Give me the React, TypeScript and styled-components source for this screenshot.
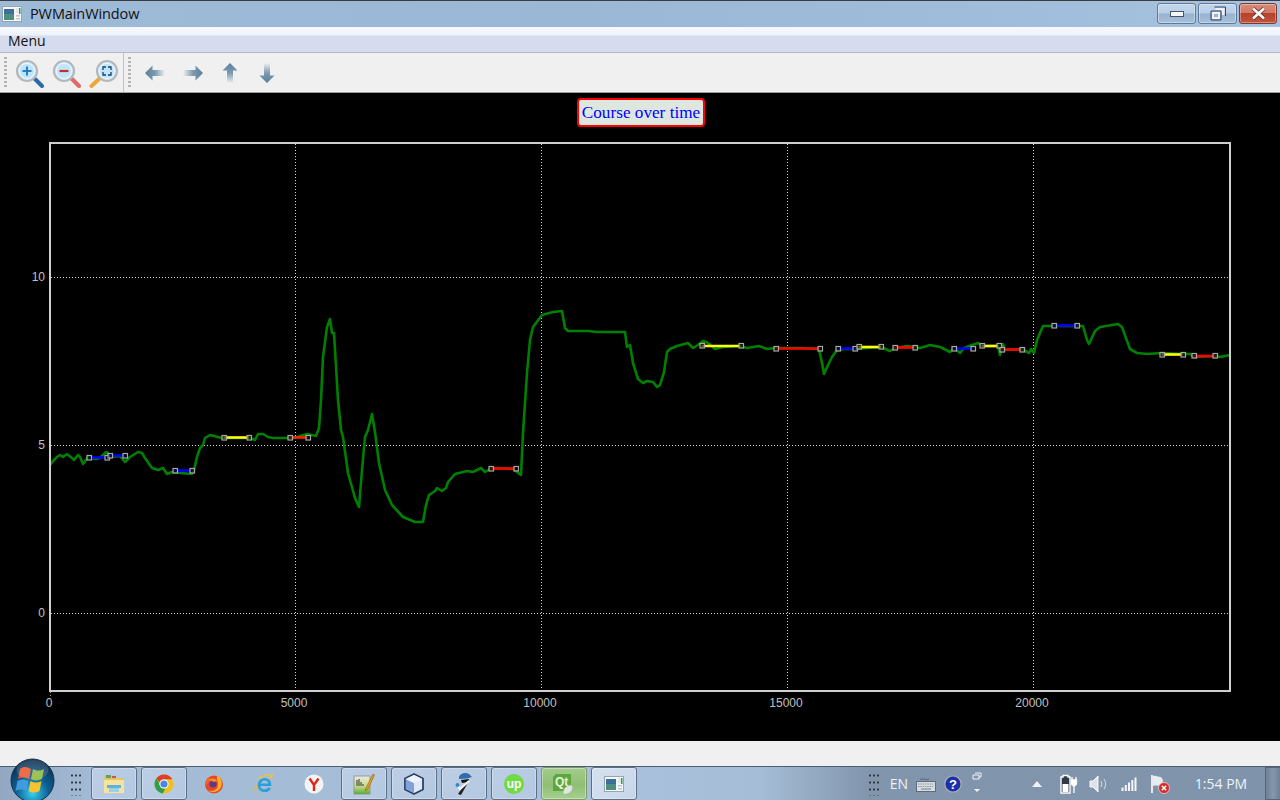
import React from "react";
import styled, { createGlobalStyle } from "styled-components";

const Global = createGlobalStyle`
  html, body { margin: 0; padding: 0; background: #000; }
  * { box-sizing: border-box; }
`;

const Page = styled.div`
  width: 1280px; height: 800px; display: flex; flex-direction: column; overflow: hidden;
  font-family: "Open Sans", "Noto Sans", sans-serif;
`;
const TitleBar = styled.div`
  height: 27px; display: flex; align-items: center; padding: 0 3px 0 2px;
  border-top: 1px solid #3c3c3c;
  background: linear-gradient(90deg, #9dbad7 0%, #9ab7d5 45%, #a0bddb 80%, #a6c2de 100%);
`;
const AppIconSlot = styled.div`width: 20px; height: 20px; display: flex; margin-right: 8px;`;
const WindowTitle = styled.div`flex: 1; font-size: 14.5px; color: #111; letter-spacing: -.1px; line-height: 26px;`;
const WinButtons = styled.div`display: flex; gap: 2px; align-self: flex-start; margin-top: 2px;`;
const WinButton = styled.div<{ $close?: boolean; $w: number }>`
  width: ${p => p.$w}px; height: 21px; border-radius: 3px; display: flex; align-items: center; justify-content: center;
  border: 1px solid ${p => (p.$close ? "#7a3a34" : "#5f7a98")};
  box-shadow: inset 0 0 0 1px rgba(255,255,255,.35);
  background: ${p => p.$close
    ? "linear-gradient(#d98a78 0%, #d27a66 45%, #b8412a 50%, #c2553f 100%)"
    : "linear-gradient(#c3d6ea 0%, #b9cfe6 48%, #97b3d0 52%, #a7c0da 100%)"};
`;
const MenuBar = styled.div`
  height: 26px; display: flex; align-items: flex-end; padding: 0 0 3px 8px;
  border-bottom: 1px solid #b4b9c8;
  background: linear-gradient(#f7f9fe 0, #eef2fb 8px, #d6dcee 9px, #d6dcee 100%);
`;
const MenuItem = styled.span`font-size: 14px; color: #111; line-height: 16px;`;
const Toolbar = styled.div`
  height: 40px; display: flex; align-items: center; background: #f0f0f0;
  border-bottom: 1px solid #9e9e9e; padding-left: 4px;
`;
const Grip = styled.div`
  width: 3px; height: 32px;
  background: repeating-linear-gradient(#b4b4b4 0 2px, transparent 2px 4px);
`;
const ToolSep = styled.div`width: 1px; height: 39px; background: #c4c4c4; margin: 0 4px 0 0; align-self: flex-start;`;
const ToolGroup = styled.div<{ $w: number; $pad: number }>`
  width: ${p => p.$w}px; padding-left: ${p => p.$pad}px; display: flex; align-items: center;
`;
const ToolIcon = styled.div<{ $w: number }>`width: ${p => p.$w}px; height: 32px; display: flex; align-items: center; justify-content: center;`;

const ChartPanel = styled.div`
  height: 648px; background: #000; display: flex; flex-direction: column; align-items: center; padding-top: 5px;
`;
const PlotTitle = styled.div`
  width: 128px; height: 29px; border: 2px solid #f00; border-radius: 4px; background: #dde6df; margin-left: 2px;
  color: #0000ff; font-family: "Liberation Serif", serif; font-size: 17.2px; line-height: 25px; text-align: center; white-space: nowrap;
`;
const Plot = styled.svg`display: block; width: 1280px; height: 614px; flex: none;`;
const AxisLabel = styled.text`
  font-family: "Liberation Sans", sans-serif; font-size: 12px; fill: #c0c0c0;
`;
const StatusBar = styled.div`height: 25px; background: #f0f0f0;`;
const Taskbar = styled.div`
  height: 34px; display: flex; align-items: stretch; border-top: 1px solid #4d5c6e;
  background: linear-gradient(90deg, #92a8c2 0, #a3bad4 90px, #a8c0dc 620px, #a6bdd7 760px, #8195ad 870px, #7f93ab 100%);
`;
const OrbSlot = styled.div`width: 64px; position: relative;`;
const Orb = styled.div`position: absolute; left: 10px; top: -9px; width: 45px; height: 45px;`;
const GripSlot = styled.div`width: 27px; display: flex; align-items: center; padding-left: 6px;`;
const TaskList = styled.div`display: flex; gap: 4px;`;
const TaskButton = styled.div<{ $variant?: "open" | "active" | "none" }>`
  width: 46px; height: 33px; display: flex; align-items: center; justify-content: center;
  border-radius: 3px;
  ${p => p.$variant === "open" && `
    border: 1px solid #5d6f85; box-shadow: inset 0 0 0 1px rgba(255,255,255,.3);
    background: linear-gradient(135deg, #bccee5 0%, #b3c8e1 100%);
  `}
  ${p => p.$variant === "active" && `
    border: 1px solid #7d9a6c; box-shadow: inset 0 0 0 1px rgba(255,255,255,.35);
    background: linear-gradient(#a4cb8c 0%, #8fbf74 55%, #a6cf90 100%);
  `}
`;
const TaskButtonLight = styled(TaskButton)`
  background: linear-gradient(135deg, #d4e1f0 0%, #c6d6ea 100%) !important;
`;
const Spacer = styled.div`flex: 1;`;
const Tray = styled.div`display: flex; align-items: center; height: 33px;`;
const TrayItem = styled.div<{ $w: number; $ml?: number }>`
  width: ${p => p.$w}px; margin-left: ${p => p.$ml || 0}px; height: 100%;
  display: flex; align-items: center; justify-content: center; position: relative;
`;
const TrayText = styled.span<{ $size: number }>`
  font-family: "Open Sans", "Noto Sans", sans-serif; font-size: ${p => p.$size}px; color: #eef3f8; white-space: nowrap;
`;
const ShowDesktop = styled.div`
  width: 15px; height: 33px; margin-left: 18px; border: 1px solid #56677a; border-right: 0;
  background: linear-gradient(90deg, #6f8096, #8497ad 50%, #6f8096);
`;
const DotsGrid = styled.div`
  width: 12px; height: 24px; 
  background-image: radial-gradient(circle, #2c3540 1px, transparent 1.2px);
  background-size: 4px 7px;
`;

const GREEN = [[50,465],[53,461],[57,457],[60,455],[63,457],[67,454],[72,458],[74,460],[78,455],[80,457],[83,464],[88,457],[95,459],[100,458],[105,453],[107,452],[110,457],[120,456],[125,462],[130,457],[138,452],[142,453],[145,458],[152,468],[158,470],[163,468],[167,474],[172,472],[180,473],[192,474],[194,470],[197,457],[200,448],[203,445],[205,438],[210,435],[222,438],[237,438],[250,438],[255,440],[258,434],[263,434],[268,437],[273,438],[288,438],[297,437],[307,434],[316,436],[319,428],[321,400],[323,357],[327,327],[330,319],[332,333],[334,333],[338,400],[341,430],[343,437],[348,473],[355,498],[359,507],[362,470],[365,437],[368,430],[372,414],[375,432],[379,463],[385,490],[392,505],[403,517],[415,522],[423,522],[426,505],[429,495],[435,491],[437,488],[442,491],[446,488],[448,482],[455,474],[467,471],[473,472],[481,468],[485,472],[490,469],[497,468],[513,469],[521,475],[523,433],[527,373],[530,340],[533,327],[542,315],[553,312],[562,311],[565,328],[568,331],[588,331],[597,332],[625,332],[627,347],[630,345],[633,363],[638,379],[643,383],[647,381],[653,382],[657,387],[660,385],[664,372],[667,352],[670,349],[677,346],[688,343],[693,348],[698,345],[703,341],[708,343],[715,349],[723,347],[740,346],[747,348],[759,346],[767,349],[775,348],[800,348],[819,349],[822,363],[824,374],[828,365],[832,357],[837,350],[845,349],[855,349],[867,348],[881,347],[890,351],[895,348],[907,346],[920,348],[930,345],[940,347],[950,352],[954,348],[960,353],[964,348],[972,345],[978,343],[983,346],[998,346],[1000,355],[1003,344],[1005,350],[1022,349],[1029,353],[1031,349],[1034,353],[1037,340],[1043,326],[1053,326],[1077,326],[1083,326],[1087,340],[1089,344],[1095,331],[1100,327],[1118,324],[1122,327],[1130,349],[1137,353],[1147,354],[1162,353],[1182,354],[1190,354],[1194,357],[1215,356],[1220,357],[1230,355]];

const SEGMENTS: [number, number, number, string][] = [
  [89,106.5,457.5,"#0000ff"],[110,124.5,455.5,"#0000ff"],[174.5,191.5,470.5,"#0000ff"],[223.5,249,437.5,"#ffff00"],[289.5,307.5,437.5,"#ff2000"],
  [490.5,515.5,468.5,"#ff0000"],[701.5,740.5,346,"#ffff00"],[775.5,819.5,348.5,"#ff0000"],[838,855,348.5,"#0000ff"],[858.5,881,347,"#ffff00"],[894.5,914.5,347.5,"#ff0000"],
  [953.5,972.5,348.5,"#0000ff"],[981.5,998.5,346,"#ffff00"],[1001.5,1021.5,349.5,"#ff0000"],[1053.5,1077,325.5,"#0000ff"],[1161.5,1182.5,354.5,"#ffff00"],[1193.5,1215,356,"#ff0000"],
];

const XT = [[50,"0"],[295,"5000"],[541,"10000"],[787,"15000"],[1033,"20000"]] as [number,string][];
const YT = [[277,"10"],[445,"5"],[613,"0"]] as [number,string][];

function Chart() {
  return (
    <Plot viewBox="0 127 1280 614">
      {XT.slice(1).map(([x]) => <line key={x} x1={x+.5} x2={x+.5} y1={144} y2={690} stroke="#d8d8d8" strokeDasharray="1 2" />)}
      {YT.map(([y]) => <line key={y} x1={51} x2={1230} y1={y+.5} y2={y+.5} stroke="#d8d8d8" strokeDasharray="1 2" />)}
      <polyline fill="none" stroke="#008000" strokeWidth={2.6} strokeLinejoin="round" points={GREEN.map(p => p.join(",")).join(" ")} />
      {SEGMENTS.map(([a,b,y,c],i) => (
        <g key={i}>
          <line x1={a} x2={b} y1={y} y2={y} stroke={c} strokeWidth={2.6} />
          <rect x={Math.round(a)-2} y={Math.round(y)-2.5} width={4.5} height={4.5} fill="#000" fillOpacity={.6} stroke="#a8a8a8" strokeWidth={1.2} />
          <rect x={Math.round(b)-2} y={Math.round(y)-2.5} width={4.5} height={4.5} fill="#000" fillOpacity={.6} stroke="#a8a8a8" strokeWidth={1.2} />
        </g>
      ))}
      <rect x={50} y={143} width={1180} height={548} fill="none" stroke="#cfcfcf" strokeWidth={2} />
      <line x1={50.5} x2={50.5} y1={692} y2={697} stroke="#aaa" strokeDasharray="1 2" />
      {XT.map(([x,t]) => <AxisLabel key={t} x={x-1} y={707} textAnchor="middle">{t}</AxisLabel>)}
      {YT.map(([y,t]) => <AxisLabel key={t} x={45} y={y+4} textAnchor="end">{t}</AxisLabel>)}
    </Plot>
  );
}

const AppIcon = ({ s = 20 }: { s?: number }) => (
  <svg width={s} height={s} viewBox="0 0 20 20">
    <rect x=".5" y="2.5" width="19" height="15" fill="#f4f6f8" stroke="#9aa4ad" />
    <rect x="2" y="5" width="10" height="11" fill="#4d8f7f" />
    <rect x="2" y="5" width="10" height="5" fill="#3c6f9a" />
    <rect x="14" y="4" width="4" height="5" fill="#e4e8ec" />
    <rect x="17" y="4" width="1.5" height="6" fill="#2f9a55" />
    <rect x="14" y="11" width="4" height="1.5" fill="#c0c6cc" />
    <rect x="14" y="14" width="4" height="1.5" fill="#c0c6cc" />
  </svg>
);

const Magnifier = ({ kind }: { kind: "plus" | "minus" | "fit" }) => {
  const fit = kind === "fit";
  const cx = fit ? 19 : 13, cy = 13;
  const hc = kind === "plus" ? "#2a6aa8" : kind === "minus" ? "#e06a6a" : "#eea838";
  return (
    <svg width={30} height={30} viewBox="0 0 30 30">
      {fit
        ? <line x1="11" y1="21" x2="3.5" y2="28" stroke={hc} strokeWidth="4" strokeLinecap="round" />
        : <line x1="21" y1="21" x2="28" y2="28" stroke={hc} strokeWidth="4" strokeLinecap="round" />}
      <circle cx={cx} cy={cy} r="10" fill="#d6eefb" stroke="#b4b8bc" strokeWidth="2.2" />
      <circle cx={cx} cy={cy} r="7.6" fill="#bfe5fb" stroke="#eef6fb" strokeWidth="1" />
      {kind === "plus" && <path d="M8.500 13h9M13 8.500v9" stroke="#2a7cc4" strokeWidth="2" />}
      {kind === "minus" && <path d="M8.500 13h9" stroke="#cc2a2a" strokeWidth="2.200" />}
      {fit && <path d="M15 12v-3h3M20 9h3v3M23 14v3h-3M18 17h-3v-3" fill="none" stroke="#1c3f66" strokeWidth="1.300" />}
    </svg>
  );
};

const Arrow = ({ dir }: { dir: "left" | "right" | "up" | "down" }) => {
  const rot = { left: 0, right: 180, up: 90, down: 270 }[dir];
  const id = `ar-${dir}`;
  return (
    <svg width={22} height={22} viewBox="0 0 22 22">
      <defs>
        <linearGradient id={id} x1="0" x2="1" y1="0" y2="0">
          <stop offset="0" stopColor="#5b7f99" />
          <stop offset=".5" stopColor="#7b9ab0" />
          <stop offset="1" stopColor="#f0f0f0" />
        </linearGradient>
      </defs>
      <path transform={`rotate(${rot} 11 11)`} d="M1 11 8.500 3.500v4.500h12.500v6H8.500v4.500z" fill={`url(#${id})`} />
    </svg>
  );
};

const Windows = () => (
  <svg width={45} height={45} viewBox="0 0 45 45">
    <defs>
      <radialGradient id="orbg" cx=".5" cy=".8" r=".75">
        <stop offset="0" stopColor="#34d0f0" />
        <stop offset=".5" stopColor="#0f5f93" />
        <stop offset="1" stopColor="#0d2f4d" />
      </radialGradient>
    </defs>
    <circle cx="22.5" cy="22.5" r="21.5" fill="url(#orbg)" stroke="#12334d" />
    <path d="M10 11c4-3 7-2 11 0l-2 10c-4-2-7-2-11 0z" fill="#e8552c" />
    <path d="M23 11c4 2 7 2 11 0l-2 10c-4 2-7 2-11 0z" fill="#8fb83c" />
    <path d="M7.500 23c4-2 7-2 11 0l-2 10c-4-2-7-2-11 0z" fill="#3f9ce0" />
    <path d="M20.500 23c4 2 7 2 11 0l-2 10c-4 2-7 2-11 0z" fill="#f5c330" />
    <ellipse cx="22.500" cy="12" rx="16" ry="10" fill="#fff" opacity=".14" />
  </svg>
);
const Folder = () => (
  <svg width={22} height={22} viewBox="0 0 22 22">
    <path d="M1 3h8l2 2h10v15H1z" fill="#e2c46c" />
    <rect x="3" y="2" width="5" height="3" fill="#5fa05f" /><rect x="9" y="3" width="4" height="2" fill="#d05050" />
    <rect x="1" y="7" width="20" height="13" fill="#f6e39c" />
    <rect x="4" y="12" width="14" height="3" fill="#5fb2dc" /><rect x="6" y="15" width="10" height="4" fill="#9ad0ea" />
  </svg>
);
const Chrome = () => (
  <svg width={20} height={20} viewBox="0 0 20 20">
    <circle cx="10" cy="10" r="9.500" fill="#f0c020" />
    <path d="M10 .5a9.500 9.500 0 0 1 8.300 4.800H10a4.800 4.800 0 0 0-4.400 2.900L2.400 4.300A9.500 9.500 0 0 1 10 .5z" fill="#dc3d30" />
    <path d="M2.400 4.300 6 10.500a4.800 4.800 0 0 0 5.300 4.200L8.700 19.400A9.500 9.500 0 0 1 2.400 4.300z" fill="#2c9f4d" />
    <circle cx="10" cy="10" r="4.600" fill="#fff" /><circle cx="10" cy="10" r="3.600" fill="#4a86e8" />
  </svg>
);
const Firefox = () => (
  <svg width={20} height={20} viewBox="0 0 20 20">
    <circle cx="10" cy="10.500" r="9" fill="#e8462a" />
    <circle cx="9" cy="10" r="3.600" fill="#5a3a8c" />
    <path d="M13 1c5 3 6 9 3.500 13S8 20 4 16c3 2 8 1 9.500-3C15 8 12 5 13 1z" fill="#f9b022" />
    <path d="M4 3c0 3-3 5-2 9 1-3 3-5 6-6z" fill="#f26b24" />
    <path d="M5 6c3-2 6-2 8 1l-3 1z" fill="#f59322" />
  </svg>
);
const IE = () => (
  <svg width={20} height={20} viewBox="0 0 20 20">
    <path d="M4 4.500C9 1 19-1 18.500 1.500 18 4 14 4 13 4" fill="none" stroke="#f0c040" strokeWidth="1.400" />
    <path d="M2 19c-2-2 0-6 2-9" fill="none" stroke="#e8b838" strokeWidth="1.600" />
    <path d="M5.500 10.800h10.500c0-3.500-2.400-5.600-5.200-5.600S5 7.500 5 11s2.400 5.800 5.700 5.800c2.400 0 4-1 5-2.800" fill="none" stroke="#2a9fd8" strokeWidth="2.600" />
  </svg>
);
const Yandex = () => (
  <svg width={20} height={20} viewBox="0 0 20 20">
    <circle cx="10" cy="10" r="9.500" fill="#f4f4f4" />
    <path d="M5.500 4.500 10 11l4.500-6.500M10 11v6" fill="none" stroke="#e1251b" strokeWidth="2.400" />
  </svg>
);
const Notes = () => (
  <svg width={22} height={22} viewBox="0 0 22 22">
    <defs><linearGradient id="ng" x1="0" x2="0" y1="0" y2="1"><stop offset="0" stopColor="#e8e8e0" /><stop offset=".55" stopColor="#c8dc90" /><stop offset="1" stopColor="#58b030" /></linearGradient></defs>
    <rect x="1" y="3" width="16" height="18" fill="url(#ng)" stroke="#8a9080" strokeWidth=".8" />
    <path d="M4 13V7M6 13V6M8 13V9M10 13v-2" stroke="#333" strokeWidth="1" />
    <path d="M20 1 13 15l-1 3 3-2L21.500 2z" fill="#e8a020" stroke="#905a10" strokeWidth=".6" />
  </svg>
);
const Cube = () => (
  <svg width={22} height={22} viewBox="0 0 22 22">
    <path d="M11 1 20 5.500v11L11 21 2 16.500v-11z" fill="#dfe8f4" stroke="#2c3f66" strokeWidth="1.800" strokeLinejoin="round" />
    <path d="M11 10 2.800 6v10L11 20z" fill="#7fa2d8" />
    <path d="M11 10 19.200 6 11 2 2.800 6z" fill="#eef3fa" />
  </svg>
);
const Spy = () => (
  <svg width={18} height={24} viewBox="0 0 18 24">
    <path d="M4 5c1-4 7-5 10-3l3 3-5 1.500-8 .5z" fill="#2f6cab" />
    <path d="M14 7 6 8l1 3 6-1z" fill="#111" />
    <path d="M14 9 6 23l-3-1L11 10z" fill="#222" />
    <path d="M2 12l3 5 9-8" fill="none" stroke="#f4f4f4" strokeWidth="2.200" />
    <circle cx="2.500" cy="13" r="2" fill="#2f8ac8" />
  </svg>
);
const UpText = styled.text`font-family: "Liberation Sans", sans-serif; font-weight: 700; font-size: 12px; fill: #fff;`;
const Upwork = () => (
  <svg width={20} height={20} viewBox="0 0 20 20">
    <circle cx="10" cy="10" r="10" fill="#6fda44" />
    <UpText x="10" y="14" textAnchor="middle">up</UpText>
  </svg>
);
const QtText = styled.text`font-family: "Liberation Sans", sans-serif; font-weight: 700; font-size: 12px; fill: #e8f4dc;`;
const Qt = () => (
  <svg width={22} height={22} viewBox="0 0 22 22">
    <path d="M3 1h15v14l-3 3H0V4z" fill="#5da83c" />
    <QtText x="2" y="13">Qt</QtText>
    <path d="M10 21c0-6 4-9 9-9 2 5-2 10-9 9z" fill="#dfe6dc" stroke="#9ab09a" strokeWidth=".5" />
  </svg>
);

const Keyboard = () => (
  <svg width={20} height={16} viewBox="0 0 20 16">
    <path d="M4 4c2-3 6 1 9-1" fill="none" stroke="#56677a" strokeWidth="1" />
    <rect x=".5" y="5.500" width="19" height="10" fill="#d8dde2" stroke="#5d6c7c" />
    <path d="M2 8h16M2 10.500h16" stroke="#8a97a5" strokeDasharray="1.500 .8" />
    <path d="M5 13h10" stroke="#8a97a5" strokeWidth="1.400" />
  </svg>
);
const HelpTxt = styled.text`font-family: "Liberation Sans", sans-serif; font-weight: 700; font-size: 13px; fill: #fff;`;
const Help = () => (
  <svg width={18} height={18} viewBox="0 0 18 18">
    <circle cx="9" cy="9" r="8.200" fill="#1d2fa8" stroke="#a8afb8" strokeWidth="1.300" />
    <HelpTxt x="9" y="14" textAnchor="middle">?</HelpTxt>
  </svg>
);
const Battery = () => (
  <svg width={18} height={20} viewBox="0 0 18 20">
    <path d="M1 3h2V1.500h5V3h2v16H1z" fill="#2e3a48" stroke="#fff" strokeWidth="1.400" />
    <rect x="2.500" y="10" width="6" height="8" fill="#fff" />
    <path d="M11 6h6M12 3v3M16 3v3M11.500 6v4l2 2h1l2-2V6M14 12v7" fill="#fff" stroke="#fff" strokeWidth="1.300" />
  </svg>
);
const Speaker = () => (
  <svg width={19} height={20} viewBox="0 0 19 20">
    <path d="M1 7h3l5-5v16l-5-5H1z" fill="#dfe3e8" stroke="#f8f8f8" />
    <path d="M12 7c1 2 1 4 0 6M15 5c2 3 2 7 0 10" fill="none" stroke="#c8d0d8" strokeWidth="1.200" />
  </svg>
);
const Signal = () => (
  <svg width={16} height={14} viewBox="0 0 16 14">
    <path d="M.5 10.500h2V14h-2zM3.800 8h2v6h-2zM7 5.500h2V14H7zM10.300 3h2v11h-2zM13.500.5h2V14h-2z" fill="#f4f6f8" />
  </svg>
);
const Flag = () => (
  <svg width={20} height={20} viewBox="0 0 20 20">
    <path d="M2 1v18" stroke="#fff" strokeWidth="1.600" />
    <path d="M3 2c3-1 5 1 8 1l2 3-1 6c-3 0-6-1-9 0z" fill="#e8ecf0" />
    <circle cx="14" cy="14" r="5.500" fill="#d42a2a" stroke="#f0d0d0" strokeWidth=".8" />
    <path d="M11.800 11.800l4.400 4.400M16.200 11.800l-4.400 4.400" stroke="#fff" strokeWidth="1.500" />
  </svg>
);

export default function App() {
  return (
    <Page>
      <Global />
      <TitleBar>
        <AppIconSlot><AppIcon /></AppIconSlot>
        <WindowTitle>PWMainWindow</WindowTitle>
        <WinButtons>
          <WinButton $w={39}>
            <svg width="14" height="6" viewBox="0 0 14 6"><rect x=".5" y=".5" width="13" height="5" fill="#f4f6f8" stroke="#44566c" /></svg>
          </WinButton>
          <WinButton $w={39}>
            <svg width="16" height="15" viewBox="0 0 16 15"><path d="M4.500 1h11v9M1 5h10v9H1z" fill="none" stroke="#33465a" strokeWidth="1" /><path d="M5.500 2h9v7H12V4H5.500zM2 6h8v7H2zM4 8v3h4V8z" fill="#eef1f4" fillRule="evenodd" /></svg>
          </WinButton>
          <WinButton $w={38} $close>
            <svg width="15" height="13" viewBox="0 0 15 13"><path d="M2 1.500l11 10M13 1.500l-11 10" stroke="#5a2a24" strokeWidth="4.200" /><path d="M2 1.500l11 10M13 1.500l-11 10" stroke="#f6f6f6" strokeWidth="2.800" /></svg>
          </WinButton>
        </WinButtons>
      </TitleBar>
      <MenuBar><MenuItem>Menu</MenuItem></MenuBar>
      <Toolbar>
        <Grip />
        <ToolGroup $w={116} $pad={4}>
          <ToolIcon $w={36}><Magnifier kind="plus" /></ToolIcon>
          <ToolIcon $w={37}><Magnifier kind="minus" /></ToolIcon>
          <ToolIcon $w={38}><Magnifier kind="fit" /></ToolIcon>
        </ToolGroup>
        <ToolSep />
        <Grip />
        <ToolGroup $w={160} $pad={5}>
          <ToolIcon $w={37}><Arrow dir="left" /></ToolIcon>
          <ToolIcon $w={40}><Arrow dir="right" /></ToolIcon>
          <ToolIcon $w={33}><Arrow dir="up" /></ToolIcon>
          <ToolIcon $w={41}><Arrow dir="down" /></ToolIcon>
        </ToolGroup>
      </Toolbar>
      <ChartPanel>
        <PlotTitle>Course over time</PlotTitle>
        <Chart />
      </ChartPanel>
      <StatusBar />
      <Taskbar>
        <OrbSlot><Orb><Windows /></Orb></OrbSlot>
        <GripSlot><DotsGrid /></GripSlot>
        <TaskList>
          <TaskButton $variant="open"><Folder /></TaskButton>
          <TaskButton $variant="open"><Chrome /></TaskButton>
          <TaskButton $variant="none"><Firefox /></TaskButton>
          <TaskButton $variant="none"><IE /></TaskButton>
          <TaskButton $variant="none"><Yandex /></TaskButton>
          <TaskButton $variant="open"><Notes /></TaskButton>
          <TaskButton $variant="open"><Cube /></TaskButton>
          <TaskButton $variant="open"><Spy /></TaskButton>
          <TaskButton $variant="open"><Upwork /></TaskButton>
          <TaskButton $variant="active"><Qt /></TaskButton>
          <TaskButtonLight $variant="open"><AppIcon /></TaskButtonLight>
        </TaskList>
        <Spacer />
        <Tray>
          <TrayItem $w={12}><DotsGrid /></TrayItem>
          <TrayItem $w={20} $ml={9}><TrayText $size={14}>EN</TrayText></TrayItem>
          <TrayItem $w={20} $ml={7}><Keyboard /></TrayItem>
          <TrayItem $w={18} $ml={8}><Help /></TrayItem>
          <TrayItem $w={10} $ml={10}>
            <svg width="10" height="24" viewBox="0 0 10 24"><path d="M3 1h6v4H7M1 3h6v4H1z" fill="none" stroke="#f0f4f8" /><path d="M2 17h6l-3 3z" fill="#f0f4f8" /></svg>
          </TrayItem>
          <TrayItem $w={10} $ml={50}>
            <svg width="10" height="6" viewBox="0 0 10 6"><path d="M5 0l5 6H0z" fill="#eef2f6" /></svg>
          </TrayItem>
          <TrayItem $w={18} $ml={18}><Battery /></TrayItem>
          <TrayItem $w={19} $ml={11}><Speaker /></TrayItem>
          <TrayItem $w={16} $ml={13}><Signal /></TrayItem>
          <TrayItem $w={20} $ml={13}><Flag /></TrayItem>
          <TrayItem $w={52} $ml={25}><TrayText $size={14}>1:54 PM</TrayText></TrayItem>
          <ShowDesktop />
        </Tray>
      </Taskbar>
    </Page>
  );
}
